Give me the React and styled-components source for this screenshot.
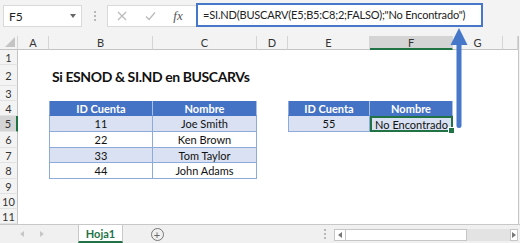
import React from 'react';
import styled, { createGlobalStyle, css } from 'styled-components';

const Global = createGlobalStyle`
  html, body { margin: 0; padding: 0; background: #f3f3f3; }
  body { font-family: Lato, "Open Sans", sans-serif; }
`;

const Frame = styled.div`
  position: relative;
  width: 520px;
  height: 243px;
  overflow: hidden;
  background: #f3f3f3;
  display: flex;
  flex-direction: column;
`;

/* ---------- formula bar ---------- */
const TopBar = styled.div`
  height: 36px;
  flex: none;
  display: flex;
  align-items: flex-start;
  padding: 5px 0 0 3px;
  box-sizing: border-box;
`;

const NameBox = styled.div`
  width: 79px;
  height: 22px;
  box-sizing: border-box;
  background: #fff;
  border: 1px solid #d9d9d9;
  display: flex;
  align-items: center;
  justify-content: space-between;
  padding: 0 5px 0 5px;
  font-size: 12px;
  color: #222;
`;

const Caret = styled.span`
  width: 0;
  height: 0;
  border-left: 3px solid transparent;
  border-right: 3px solid transparent;
  border-top: 4px solid #666;
`;

const Grip = styled.div`
  width: 25px;
  height: 22px;
  display: flex;
  flex-direction: column;
  align-items: center;
  justify-content: center;
  gap: 2px;
`;

const GripDot = styled.span`
  width: 2px;
  height: 2px;
  background: #b8b8b8;
`;

const ActionBox = styled.div`
  width: 89px;
  height: 22px;
  box-sizing: border-box;
  background: #fff;
  border: 1px solid #d9d9d9;
  border-right: none;
  display: grid;
  grid-template-columns: 28px 28px 28px;
  align-items: center;
  justify-items: center;
`;

const FxLabel = styled.span`
  font-family: "Liberation Serif", serif;
  font-style: italic;
  font-size: 13px;
  color: #555;
`;

const FormulaBox = styled.div`
  width: 287px;
  height: 24px;
  margin-top: -2px;
  box-sizing: border-box;
  border: 2px solid #4677c8;
  background: #fff;
  padding-left: 5px;
  font-size: 11px;
  letter-spacing: -0.18px;
  line-height: 20px;
  color: #222;
  white-space: nowrap;
  overflow: hidden;
`;

/* ---------- sheet grid ---------- */
const Sheet = styled.div`
  flex: none;
  width: 519px;
  height: 188px;
  box-sizing: border-box;
  border-right: 1px solid #c6c6c6;
  background: #fff;
  display: grid;
  grid-template-columns: 18px 31px 104px 104px 31px 82px 83px 50px 15px;
  grid-template-rows: 14px 15px 21px 15px 15px 16px 16px 15px 16px 15px 15px 15px;
`;

const ColHead = styled.div`
  box-sizing: border-box;
  background: ${(p) => (p.$active ? '#d4d4d4' : '#f3f3f3')};
  border-right: 1px solid #d5d5d5;
  border-bottom: ${(p) => (p.$active ? '2px solid #217346' : '1px solid #c3c3c3')};
  display: flex;
  align-items: center;
  justify-content: center;
  font-size: 11px;
  color: #333;
`;

const Corner = styled(ColHead)`
  position: relative;
  &::after {
    content: '';
    position: absolute;
    right: 2px;
    bottom: 2px;
    width: 0;
    height: 0;
    border-left: 10px solid transparent;
    border-bottom: 10px solid #c4c4c4;
  }
`;

const RowHead = styled.div`
  box-sizing: border-box;
  background: ${(p) => (p.$active ? '#d4d4d4' : '#f3f3f3')};
  border-right: ${(p) => (p.$active ? '2px solid #217346' : '1px solid #c3c3c3')};
  border-bottom: 1px solid #e2e2e2;
  display: flex;
  align-items: center;
  justify-content: center;
  font-size: 11px;
  color: #333;
`;

const tones = {
  head: '#4472c4',
  band: '#d9e1f2',
  plain: '#ffffff',
};

const Cell = styled.div`
  position: relative;
  box-sizing: border-box;
  min-width: 0;
  display: flex;
  align-items: center;
  justify-content: center;
  font-size: 11px;
  color: #111;
  white-space: nowrap;
  background: ${(p) => tones[p.$tone] || 'transparent'};
  ${(p) =>
    p.$tone &&
    css`
      border-right: 1px solid #8eaadb;
      border-bottom: 1px solid #8eaadb;
    `}
  ${(p) =>
    p.$edge &&
    css`
      border-left: 1px solid #8eaadb;
    `}
  ${(p) =>
    p.$tone === 'head' &&
    css`
      color: #fff;
      font-weight: 700;
      border-right-color: #a9bfe6;
      border-bottom-color: #4472c4;
    `}
  ${(p) =>
    p.$selected &&
    css`
      border: 2px solid #217346;
    `}
`;

const Title = styled.div`
  grid-column: span 2;
  display: flex;
  align-items: center;
  padding: 2px 0 0 3px;
  font-size: 14px;
  letter-spacing: -0.4px;
  font-weight: 700;
  color: #111;
  white-space: nowrap;
`;

const FillHandle = styled.span`
  position: absolute;
  right: -4px;
  bottom: -4px;
  width: 5px;
  height: 5px;
  background: #217346;
  border: 1px solid #fff;
`;

/* ---------- sheet tabs ---------- */
const TabBar = styled.div`
  flex: 1;
  box-sizing: border-box;
  border-top: 1px solid #c8c8c8;
  background: #f0f0f0;
  display: flex;
  align-items: stretch;
`;

const TabNav = styled.div`
  width: 78px;
  display: flex;
  align-items: center;
  padding-left: 20px;
  gap: 16px;
  box-sizing: border-box;
`;

const Tri = styled.span`
  width: 0;
  height: 0;
  border-top: 3px solid transparent;
  border-bottom: 3px solid transparent;
  ${(p) =>
    p.$dir === 'left'
      ? css`border-right: 4px solid ${p.$color || '#c6c6c6'};`
      : css`border-left: 4px solid ${p.$color || '#c6c6c6'};`}
`;

const SheetTab = styled.div`
  width: 45px;
  box-sizing: border-box;
  background: #fff;
  border-left: 1px solid #c8c8c8;
  border-right: 1px solid #c8c8c8;
  border-bottom: 2px solid #217346;
  display: flex;
  align-items: center;
  justify-content: center;
  font-size: 11px;
  font-weight: 700;
  color: #217346;
`;

const AddSlot = styled.div`
  width: 68px;
  display: flex;
  align-items: center;
  justify-content: center;
`;

const AddButton = styled.span`
  width: 11px;
  height: 11px;
  border: 1px solid #777;
  border-radius: 50%;
  display: flex;
  align-items: center;
  justify-content: center;
  font-size: 11px;
  line-height: 1;
  color: #666;
`;

const Spacer = styled.div`
  flex: 1;
`;

const TabGrip = styled(Grip)`
  width: 18px;
  height: auto;
`;

const ScrollBar = styled.div`
  width: 184px;
  height: 12px;
  margin: 4px 2px 0 0;
  display: flex;
  background: #e3e3e3;
`;

const ScrollBtn = styled.div`
  width: ${(p) => p.$w}px;
  box-sizing: border-box;
  background: #fff;
  border: 1px solid #c6c6c6;
  display: flex;
  align-items: center;
  justify-content: center;
`;

const Thumb = styled.div`
  width: 121px;
  box-sizing: border-box;
  background: #fff;
  border: 1px solid #c6c6c6;
  border-left: none;
`;

const ArrowOverlay = styled.svg`
  position: absolute;
  left: 449px;
  top: 26px;
  pointer-events: none;
`;

/* ---------- data ---------- */
const columns = ['A', 'B', 'C', 'D', 'E', 'F', 'G', ''];
const rowCount = 11;

const cells = {
  B4: { text: 'ID Cuenta', tone: 'head', edge: true },
  C4: { text: 'Nombre', tone: 'head' },
  B5: { text: '11', tone: 'band', edge: true },
  C5: { text: 'Joe Smith', tone: 'band' },
  B6: { text: '22', tone: 'plain', edge: true },
  C6: { text: 'Ken Brown', tone: 'plain' },
  B7: { text: '33', tone: 'band', edge: true },
  C7: { text: 'Tom Taylor', tone: 'band' },
  B8: { text: '44', tone: 'plain', edge: true },
  C8: { text: 'John Adams', tone: 'plain' },
  E4: { text: 'ID Cuenta', tone: 'head', edge: true },
  F4: { text: 'Nombre', tone: 'head' },
  E5: { text: '55', tone: 'band', edge: true },
  F5: { text: 'No Encontrado', tone: 'band', selected: true },
};

function SheetGrid() {
  const out = [];
  out.push(<Corner key="corner" />);
  columns.forEach((c, i) =>
    out.push(
      <ColHead key={`h${i}`} $active={c === 'F'}>
        {c}
      </ColHead>
    )
  );
  for (let r = 1; r <= rowCount; r += 1) {
    out.push(
      <RowHead key={`r${r}`} $active={r === 5}>
        {r}
      </RowHead>
    );
    for (let ci = 0; ci < columns.length; ci += 1) {
      const c = columns[ci];
      const id = `${c}${r}`;
      if (id === 'B2') {
        out.push(<Title key={id}>Si ESNOD &amp; SI.ND en BUSCARVs</Title>);
        ci += 1;
        continue;
      }
      const spec = cells[id];
      out.push(
        <Cell
          key={`${r}-${ci}`}
          $tone={spec?.tone}
          $edge={spec?.edge}
          $selected={spec?.selected}
        >
          {spec?.text}
          {spec?.selected && <FillHandle />}
        </Cell>
      );
    }
  }
  return <Sheet>{out}</Sheet>;
}

export default function App() {
  return (
    <Frame>
      <Global />
      <TopBar>
        <NameBox>
          <span>F5</span>
          <Caret />
        </NameBox>
        <Grip>
          <GripDot />
          <GripDot />
          <GripDot />
        </Grip>
        <ActionBox>
          <svg width="10" height="10" viewBox="0 0 10 10">
            <path d="M1 1 L9 9 M9 1 L1 9" stroke="#b9b9b9" strokeWidth="1.2" fill="none" />
          </svg>
          <svg width="11" height="10" viewBox="0 0 11 10">
            <path d="M1 5.5 L4 8.5 L10 1.5" stroke="#b9b9b9" strokeWidth="1.2" fill="none" />
          </svg>
          <FxLabel>fx</FxLabel>
        </ActionBox>
        <FormulaBox>=SI.ND(BUSCARV(E5;B5:C8;2;FALSO);"No Encontrado")</FormulaBox>
      </TopBar>
      <SheetGrid />
      <TabBar>
        <TabNav>
          <Tri $dir="left" />
          <Tri $dir="right" />
        </TabNav>
        <SheetTab>Hoja1</SheetTab>
        <AddSlot>
          <AddButton>+</AddButton>
        </AddSlot>
        <Spacer />
        <TabGrip>
          <GripDot />
          <GripDot />
          <GripDot />
        </TabGrip>
        <ScrollBar>
          <ScrollBtn $w={12}>
            <Tri $dir="left" $color="#777" />
          </ScrollBtn>
          <Thumb />
          <Spacer />
          <ScrollBtn $w={8}>
            <Tri $dir="right" $color="#777" />
          </ScrollBtn>
        </ScrollBar>
      </TabBar>
      <ArrowOverlay width="22" height="108" viewBox="0 0 22 108">
        <rect x="7.5" y="16" width="5" height="86" rx="2.5" fill="#4677c8" />
        <polygon points="10,2 18.5,19 1.5,19" fill="#4677c8" />
      </ArrowOverlay>
    </Frame>
  );
}
